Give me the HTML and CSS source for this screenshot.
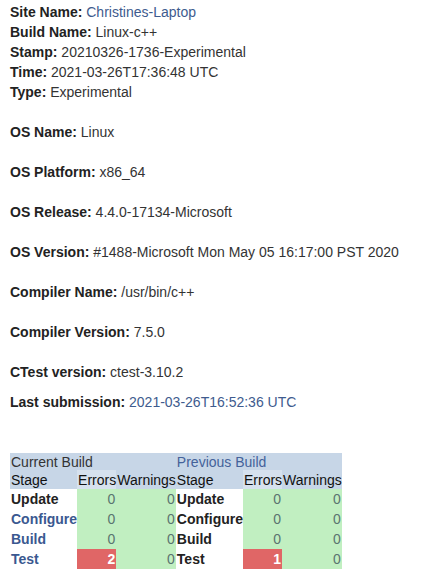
FILE: index.html
```html
<!DOCTYPE html>
<html>
<head>
<meta charset="utf-8">
<link rel="stylesheet" href="styles.css">
</head>
<body>
<div class="info">
  <div class="line"><b>Site Name:</b> <a class="link">Christines-Laptop</a></div>
  <div class="line"><b>Build Name:</b> Linux-c++</div>
  <div class="line"><b>Stamp:</b> 20210326-1736-Experimental</div>
  <div class="line"><b>Time:</b> 2021-03-26T17:36:48 UTC</div>
  <div class="line"><b>Type:</b> Experimental</div>
  <div class="line spaced"><b>OS Name:</b> Linux</div>
  <div class="line spaced"><b>OS Platform:</b> x86_64</div>
  <div class="line spaced"><b>OS Release:</b> 4.4.0-17134-Microsoft</div>
  <div class="line spaced"><b>OS Version:</b> #1488-Microsoft Mon May 05 16:17:00 PST 2020</div>
  <div class="line spaced"><b>Compiler Name:</b> /usr/bin/c++</div>
  <div class="line spaced"><b>Compiler Version:</b> 7.5.0</div>
  <div class="line spaced"><b>CTest version:</b> ctest-3.10.2</div>
  <div class="line close"><b>Last submission:</b> <a class="link">2021-03-26T16:52:36 UTC</a></div>
</div>
<div class="builds">
  <table class="summary">
    <tr class="title"><td colspan="3">Current Build</td></tr>
    <tr class="head"><td>Stage</td><td class="sorted">Errors</td><td>Warnings</td></tr>
    <tr><td class="stage">Update</td><td class="num ok">0</td><td class="num ok">0</td></tr>
    <tr><td class="stage"><a class="link">Configure</a></td><td class="num ok">0</td><td class="num ok">0</td></tr>
    <tr><td class="stage"><a class="link">Build</a></td><td class="num ok">0</td><td class="num ok">0</td></tr>
    <tr><td class="stage"><a class="link">Test</a></td><td class="num bad">2</td><td class="num ok">0</td></tr>
  </table>
  <table class="summary">
    <tr class="title"><td colspan="3"><a class="link plain">Previous Build</a></td></tr>
    <tr class="head"><td>Stage</td><td class="sorted">Errors</td><td>Warnings</td></tr>
    <tr><td class="stage">Update</td><td class="num ok">0</td><td class="num ok">0</td></tr>
    <tr><td class="stage">Configure</td><td class="num ok">0</td><td class="num ok">0</td></tr>
    <tr><td class="stage">Build</td><td class="num ok">0</td><td class="num ok">0</td></tr>
    <tr><td class="stage">Test</td><td class="num bad">1</td><td class="num ok">0</td></tr>
  </table>
</div>
</body>
</html>
```

FILE: styles.css
```css
html, body {
  margin: 0;
  padding: 0;
  background: #ffffff;
}

body {
  font-family: "Liberation Sans", Arial, sans-serif;
  font-size: 14px;
  color: #333333;
  padding: 2px 0 0 10px;
}

.info b {
  color: #222222;
}

.line {
  line-height: 20px;
  white-space: nowrap;
}

.line.spaced {
  margin-top: 20px;
}

.line.close {
  margin-top: 10px;
}

.link {
  color: #3e5b8e;
  text-decoration: none;
}

.builds {
  display: flex;
  align-items: flex-start;
  margin-top: 41px;
}

.summary {
  border-collapse: collapse;
  border-spacing: 0;
}

.summary td {
  padding: 0 0 0 1px;
  line-height: 16px;
  vertical-align: middle;
  white-space: nowrap;
}

.summary .title td {
  height: 17px;
  background: #c7d6e7;
  color: #333333;
}

.summary .title .plain {
  color: #44629a;
}

.summary .head td {
  height: 19px;
  background: #c7d6e7;
  color: #111111;
}

.summary .head td.sorted {
  background: #d6e1ee;
}

.summary td.stage {
  height: 20px;
  font-weight: bold;
  color: #222222;
  background: #ffffff;
}

.summary td.stage .link {
  color: #3a5890;
}

.summary td.num {
  text-align: right;
  padding: 0 1px 0 0;
  color: #5a7470;
}

.summary td.ok {
  background: #c1efc1;
}

.summary td.bad {
  background: #e06666;
  color: #ffffff;
  font-weight: bold;
}
```
